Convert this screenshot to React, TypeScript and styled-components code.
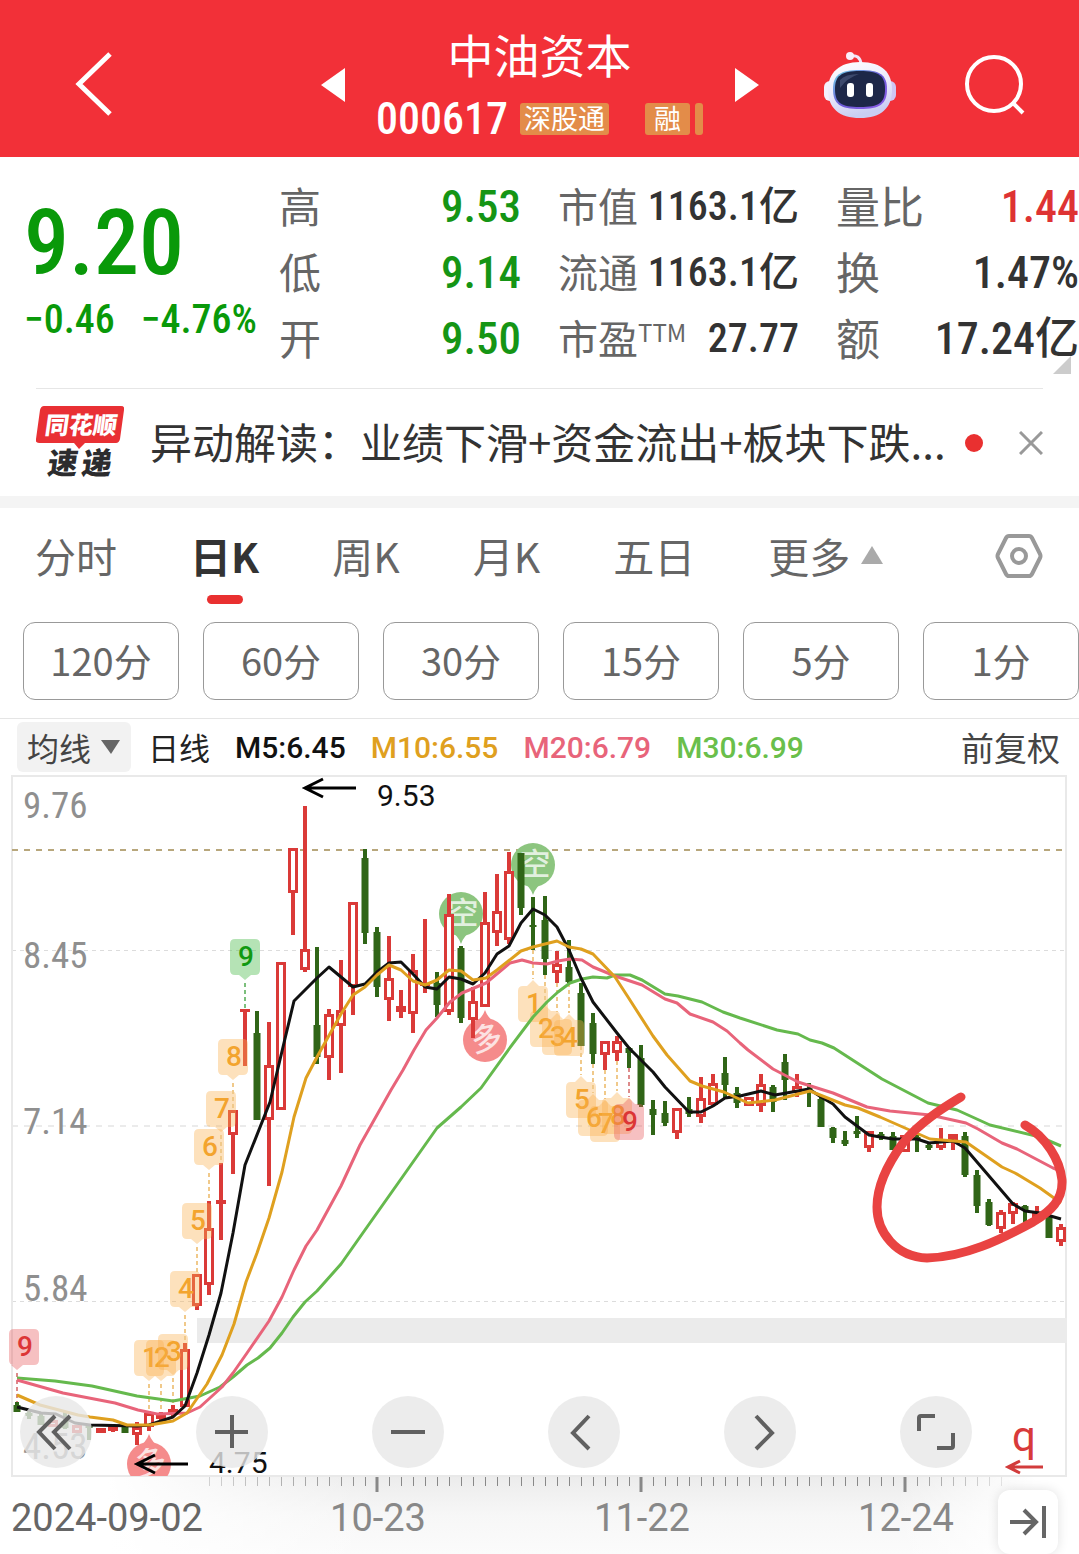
import React from "react";
import styled, { createGlobalStyle } from "styled-components";

const CJK = `"Noto Sans CJK SC", sans-serif`;
const NUM = `"Roboto Condensed", "Liberation Sans Narrow", Roboto, "Noto Sans CJK SC", sans-serif`;
const WIDE = `Roboto, "Noto Sans CJK SC", sans-serif`;

const GlobalStyle = createGlobalStyle`
  *, *::before, *::after { box-sizing: border-box; }
  body { margin: 0; background: #fff; color: #333; font-family: ${CJK}; }
  button, select { font: inherit; color: inherit; background: none; border: 0; padding: 0; margin: 0; cursor: pointer; }
  h1, p, dl, dt, dd { margin: 0; font-weight: 400; }
`;

const Page = styled.main`
  width: 100%;
  overflow-x: hidden;
`;

/* ---------- header ---------- */

const Header = styled.header`
  display: grid;
  grid-template-columns: 1fr 438px 1fr;
  align-items: center;
  height: 157px;
  padding-top: 12px;
  background: #f23038;
  color: #fff;
`;
const BackButton = styled.button`
  justify-self: start;
  margin-left: 72px;
  line-height: 0;
`;
const StockSwitcher = styled.div`
  display: flex;
  align-items: center;
  justify-content: space-between;
`;
const ArrowButton = styled.button`
  line-height: 0;
`;
const StockTitle = styled.div`
  display: flex;
  flex-direction: column;
  align-items: center;
`;
const StockName = styled.h1`
  font-size: 46px;
  line-height: 64px;
`;
const CodeRow = styled.div`
  display: flex;
  align-items: center;
  height: 64px;
  padding-top: 4px;
`;
const Code = styled.span`
  margin-right: 12px;
  font: 500 44px/48px ${NUM};
`;
const Badge = styled.span<{ $gap?: number; $pad?: number }>`
  margin-left: ${(p) => p.$gap ?? 0}px;
  padding: 0 ${(p) => p.$pad ?? 4}px;
  height: 32px;
  border-radius: 3px;
  background: #e38c49;
  font-size: 27px;
  line-height: 30px;
`;
const HeaderActions = styled.div`
  display: flex;
  justify-content: flex-end;
  align-items: center;
  gap: 66px;
  padding-right: 52px;
`;

/* ---------- quote ---------- */

const Quote = styled.section`
  position: relative;
  display: grid;
  grid-template-columns: minmax(0, 218fr) minmax(0, 242fr) minmax(0, 241fr) minmax(0, 243fr);
  column-gap: 37px;
  height: 231px;
  padding: 17px 0 17px 24px;
`;
const PriceBlock = styled.div`
  display: flex;
  flex-direction: column;
  padding-top: 22px;
  color: #099909;
  white-space: nowrap;
`;
const Price = styled.strong`
  font: 500 90px/96px ${NUM};
`;
const Change = styled.p`
  display: flex;
  gap: 26px;
  font: 500 40px/56px ${NUM};
`;
const Stats = styled.dl`
  display: flex;
  flex-direction: column;
`;
const Stat = styled.div`
  display: flex;
  justify-content: space-between;
  align-items: center;
  height: 66px;
  white-space: nowrap;
`;
const StatLabel = styled.dt<{ $size: number }>`
  padding-bottom: 4px;
  font-size: ${(p) => p.$size}px;
  line-height: 60px;
  color: #666;
  sup { font: 400 24px/24px ${CJK}; vertical-align: 12px; }
`;
const StatValue = styled.dd<{ $color?: string; $size: number }>`
  font: 500 ${(p) => p.$size}px/60px ${NUM};
  color: ${(p) => p.$color ?? "#333"};
`;
const Corner = styled.span`
  position: absolute;
  right: 8px;
  bottom: 14px;
  border: 9px solid #ccc;
  border-top-color: transparent;
  border-left-color: transparent;
`;

/* ---------- news ---------- */

const News = styled.section`
  display: flex;
  align-items: center;
  height: 108px;
  margin: 0 36px;
  border-top: 1px solid #e6e6e6;
`;
const NewsLink = styled.a`
  flex: 1;
  margin-left: 26px;
  padding-bottom: 4px;
  font-size: 42px;
  line-height: 60px;
  color: #333;
  text-decoration: none;
  white-space: nowrap;
`;
const Dot = styled.span`
  width: 18px;
  height: 18px;
  margin-right: 36px;
  border-radius: 50%;
  background: #e93030;
`;
const IconButton = styled.button`
  line-height: 0;
`;
const Band = styled.div`
  height: 12px;
  background: #f4f4f4;
`;

/* ---------- period tabs ---------- */

const Tabs = styled.nav`
  display: flex;
  align-items: flex-start;
  gap: 73px;
  height: 114px;
  padding: 18px 36px 0 35px;
`;
const Tab = styled.button<{ $active?: boolean }>`
  display: flex;
  flex-direction: column;
  align-items: center;
  font-size: 41px;
  line-height: 58px;
  font-weight: ${(p) => (p.$active ? 700 : 400)};
  color: ${(p) => (p.$active ? "#333" : "#666")};
  white-space: nowrap;
  &::after {
    content: "";
    width: 36px;
    height: 9px;
    margin-top: 11px;
    border-radius: 5px;
    background: ${(p) => (p.$active ? "#e93030" : "transparent")};
  }
`;
const MoreTab = styled.button`
  display: flex;
  align-items: center;
  gap: 10px;
  font-size: 41px;
  line-height: 58px;
  color: #666;
`;
const SettingsButton = styled.button`
  margin: 5px 0 0 auto;
  line-height: 0;
`;
const Chips = styled.div`
  display: grid;
  grid-template-columns: repeat(6, 1fr);
  gap: 24px;
  padding: 0 0 18px 23px;
`;
const Chip = styled.button`
  height: 78px;
  padding-bottom: 4px;
  border: 1px solid #999;
  border-radius: 12px;
  font-size: 38px;
  color: #666;
`;

/* ---------- legend ---------- */

const Legend = styled.div`
  display: flex;
  align-items: center;
  gap: 25px;
  height: 56px;
  padding: 1px 19px 0 17px;
  border-top: 1px solid #e5e5e5;
  font: 500 30px/48px ${WIDE};
  white-space: nowrap;
`;
const SelectBox = styled.label`
  display: flex;
  align-items: center;
  height: 50px;
  margin-right: -8px;
  padding: 0 11px 0 10px;
  border-radius: 6px;
  background: #f2f2f2;
  select {
    width: 74px;
    appearance: none;
    font: 400 32px/48px ${CJK};
    color: #444;
  }
`;
const LegendName = styled.span`
  font: 400 31px/48px ${CJK};
  color: #222;
`;
const Average = styled.span<{ $color: string }>`
  padding-top: 2px;
  color: ${(p) => p.$color};
`;
const Adjust = styled.button`
  margin-left: auto;
  font: 400 33px/48px ${CJK};
  color: #444;
`;

/* ---------- chart ---------- */

const ChartArea = styled.section`
  position: relative;
`;
const ChartSvg = styled.svg`
  display: block;
  width: 100%;
  height: auto;
`;
const Tools = styled.div`
  position: absolute;
  left: 20px;
  right: 107px;
  bottom: 86px;
  display: flex;
  justify-content: space-between;
`;
const ToolButton = styled.button`
  width: 72px;
  height: 72px;
  border-radius: 50%;
  background: rgba(231, 231, 231, 0.8);
  line-height: 0;
`;
const LatestButton = styled.button`
  position: absolute;
  right: 21px;
  bottom: 0;
  width: 60px;
  height: 64px;
  border-radius: 12px;
  background: #fff;
  box-shadow: 0 0 12px rgba(0, 0, 0, 0.12);
  line-height: 0;
`;

const RED = "#da3a38";
const GREEN = "#306517";
const STEP = 12;
const FIRST = 17;

type Candle = [kind: "r" | "g", high: number, low: number, top: number, bottom: number];

const candles: Candle[] = [
  ["g", 1402, 1412, 1405, 1412], ["g", 1409, 1419, 1413, 1416], ["g", 1412, 1425, 1416, 1425],
  ["r", 1419, 1427, 1420, 1427], ["g", 1412, 1429, 1421, 1428], ["r", 1425, 1433, 1425, 1433],
  ["g", 1425, 1440, 1426, 1428], ["r", 1428, 1433, 1428, 1433], ["r", 1424, 1432, 1426, 1431],
  ["g", 1426, 1433, 1427, 1433], ["r", 1422, 1445, 1427, 1435], ["r", 1411, 1431, 1413, 1427],
  ["r", 1412, 1420, 1413, 1419], ["r", 1405, 1416, 1409, 1415], ["r", 1343, 1407, 1349, 1407],
  ["r", 1274, 1310, 1274, 1306], ["r", 1201, 1295, 1228, 1285], ["r", 1163, 1240, 1200, 1204],
  ["r", 1110, 1174, 1110, 1135], ["r", 1009, 1066, 1009, 1012], ["g", 1011, 1120, 1033, 1120],
  ["r", 1022, 1186, 1065, 1120], ["r", 962, 1110, 962, 1110], ["r", 848, 935, 848, 893],
  ["r", 806, 972, 949, 970], ["g", 947, 1064, 1025, 1057], ["r", 1009, 1080, 1014, 1058],
  ["r", 960, 1073, 1010, 1026], ["r", 902, 1015, 902, 987], ["g", 849, 944, 858, 933],
  ["g", 927, 997, 932, 987], ["r", 936, 1021, 978, 1000], ["r", 990, 1018, 1006, 1012],
  ["r", 954, 1033, 970, 1014], ["r", 919, 993, 983, 986], ["g", 972, 1017, 983, 1005],
  ["r", 894, 1015, 914, 1012], ["g", 946, 1023, 948, 1018], ["r", 987, 1038, 1001, 1020],
  ["r", 892, 1007, 922, 1007], ["r", 874, 946, 911, 933], ["r", 852, 944, 871, 940],
  ["g", 853, 915, 853, 908], ["g", 897, 950, 925, 927], ["g", 896, 975, 920, 959],
  ["r", 951, 983, 964, 973], ["g", 940, 983, 967, 982], ["g", 983, 1046, 993, 1046],
  ["g", 1013, 1064, 1023, 1054], ["r", 1041, 1070, 1041, 1055], ["r", 1036, 1061, 1041, 1053],
  ["g", 1047, 1068, 1048, 1053], ["g", 1045, 1107, 1058, 1105], ["g", 1100, 1135, 1109, 1115],
  ["g", 1101, 1126, 1113, 1123], ["r", 1108, 1139, 1108, 1133], ["g", 1097, 1117, 1109, 1114],
  ["r", 1077, 1123, 1098, 1117], ["r", 1074, 1106, 1083, 1105], ["g", 1057, 1098, 1073, 1085],
  ["g", 1087, 1108, 1093, 1103], ["r", 1097, 1106, 1097, 1106], ["r", 1074, 1112, 1084, 1106],
  ["g", 1085, 1112, 1087, 1102], ["g", 1054, 1100, 1062, 1080], ["r", 1074, 1097, 1086, 1093],
  ["g", 1083, 1107, 1088, 1090], ["g", 1097, 1127, 1099, 1127], ["g", 1127, 1143, 1128, 1138],
  ["g", 1131, 1146, 1140, 1144], ["g", 1116, 1138, 1131, 1134], ["r", 1131, 1152, 1131, 1148],
  ["g", 1132, 1140, 1134, 1138], ["g", 1132, 1150, 1136, 1150], ["r", 1135, 1152, 1135, 1152],
  ["g", 1135, 1152, 1137, 1140], ["g", 1142, 1150, 1145, 1148], ["r", 1128, 1150, 1139, 1148],
  ["r", 1134, 1150, 1134, 1140], ["g", 1132, 1177, 1136, 1175], ["g", 1170, 1213, 1175, 1206],
  ["g", 1199, 1226, 1202, 1225], ["r", 1210, 1233, 1212, 1229], ["r", 1202, 1224, 1203, 1214],
  ["g", 1205, 1225, 1206, 1210], ["r", 1206, 1219, 1212, 1218], ["g", 1207, 1238, 1216, 1238],
  ["r", 1224, 1246, 1227, 1242],
];

const averages = [
  {
    color: "#65b94d",
    points:
      "17,1378 55,1381 92,1386 137,1396 173,1401 200,1396 220,1387 233,1377 247,1365 258,1358 270,1348 282,1333 293,1317 305,1302 317,1291 341,1264 360,1237 401,1179 437,1128 461,1107 481,1088 509,1049 533,1017 547,1002 558,992 570,983 582,979 593,977 607,978 615,975 630,975 642,980 665,994 678,996 702,1002 723,1012 740,1018 777,1030 798,1034 810,1040 822,1043 834,1048 882,1079 928,1103 957,1110 990,1125 1040,1137 1061,1146",
  },
  {
    color: "#e8647a",
    points:
      "17,1380 63,1393 115,1403 138,1410 157,1414 187,1413 200,1407 222,1387 233,1373 247,1353 269,1321 282,1297 294,1270 306,1246 317,1230 341,1186 360,1145 391,1090 403,1070 414,1050 426,1030 437,1018 450,1002 462,993 486,983 498,973 510,963 522,960 533,963 547,964 558,961 570,959 582,960 593,967 615,976 642,985 665,999 677,1003 690,1014 713,1022 727,1031 740,1043 748,1050 773,1069 798,1082 833,1093 867,1107 890,1111 930,1115 966,1123 978,1129 1002,1143 1017,1149 1053,1168 1061,1171",
  },
  {
    color: "#111",
    points:
      "17,1407 41,1413 56,1414 75,1423 90,1425 137,1426 149,1425 173,1417 185,1406 197,1373 209,1335 221,1293 233,1233 245,1165 270,1102 283,1047 294,1001 317,978 329,967 353,987 365,984 377,972 389,963 401,962 413,974 425,987 437,989 449,977 461,979 473,984 485,973 497,954 509,946 521,923 533,909 545,915 557,927 569,950 581,978 593,1002 617,1033 629,1048 641,1060 653,1072 665,1087 689,1112 701,1112 713,1106 725,1098 740,1096 761,1091 775,1095 809,1089 821,1097 833,1104 845,1117 869,1135 880,1137 893,1139 917,1139 929,1143 953,1141 965,1148 1013,1204 1025,1211 1040,1213 1061,1219",
  },
  {
    color: "#dfa01f",
    points:
      "17,1395 40,1405 78,1415 90,1417 113,1420 127,1425 150,1425 173,1421 187,1413 207,1384 222,1355 234,1324 246,1282 257,1253 269,1218 282,1172 294,1117 306,1078 317,1057 341,1014 353,995 365,987 377,975 389,965 401,970 413,981 425,985 437,980 449,970 461,971 473,980 486,978 497,970 521,951 533,947 557,941 569,947 581,949 593,954 615,977 628,997 653,1036 667,1055 690,1081 702,1086 724,1092 748,1103 775,1100 810,1091 845,1105 858,1108 880,1117 930,1139 966,1142 1002,1167 1015,1173 1040,1188 1061,1203",
  },
];

type TagProps = { x: number; y: number; n: number; end: number; tone?: "o" | "r" | "g"; up?: boolean; boxX?: number };

const tones = {
  o: { fill: "rgba(250,176,80,0.38)", text: "#f3a42e", line: "#f0c98a" },
  r: { fill: "rgba(232,90,92,0.38)", text: "#dc3636", line: "#dd8a8a" },
  g: { fill: "rgba(70,185,70,0.4)", text: "#119911", line: "#7cbf7c" },
};

const tags: TagProps[] = [
  { x: 17, y: 1329, n: 9, end: 1402, tone: "r", boxX: 24 },
  { x: 149, y: 1340, n: 1, end: 1411 }, { x: 161, y: 1340, n: 2, end: 1411 },
  { x: 173, y: 1334, n: 3, end: 1405 }, { x: 185, y: 1271, n: 4, end: 1343 },
  { x: 197, y: 1203, n: 5, end: 1274 }, { x: 209, y: 1129, n: 6, end: 1201 },
  { x: 221, y: 1091, n: 7, end: 1163 }, { x: 233, y: 1039, n: 8, end: 1110 },
  { x: 245, y: 939, n: 9, end: 1009, tone: "g" },
  { x: 533, y: 986, n: 1, end: 950, up: true }, { x: 545, y: 1011, n: 2, end: 975, up: true },
  { x: 557, y: 1019, n: 3, end: 983, up: true }, { x: 569, y: 1020, n: 4, end: 983, up: true },
  { x: 581, y: 1082, n: 5, end: 1046, up: true }, { x: 593, y: 1100, n: 6, end: 1064, up: true },
  { x: 605, y: 1106, n: 7, end: 1070, up: true }, { x: 617, y: 1098, n: 8, end: 1061, up: true },
  { x: 629, y: 1104, n: 9, end: 1068, tone: "r", up: true },
];

function Tag({ x, y, n, end, tone = "o", up, boxX = x }: TagProps) {
  const t = tones[tone];
  const l = boxX - 15;
  const r = boxX + 15;
  const b = y + 36;
  const d = up
    ? `M${l + 5} ${y}H${x - 6}L${x} ${y - 6}L${x + 6} ${y}H${r - 5}q5 0 5 5V${b - 5}q0 5 -5 5H${l + 5}q-5 0 -5 -5V${y + 5}q0 -5 5 -5Z`
    : `M${l + 5} ${y}H${r - 5}q5 0 5 5V${b - 5}q0 5 -5 5H${x + 6}L${x} ${b + 5}L${x - 6} ${b}H${l + 5}q-5 0 -5 -5V${y + 5}q0 -5 5 -5Z`;
  return (
    <g>
      <path d={`M${x} ${up ? end : b + 8}V${up ? y - 7 : end}`} stroke={t.line} strokeWidth="2" strokeDasharray="4 3" />
      <path d={d} fill={t.fill} />
      <text x={boxX + 1} y={y + 27} textAnchor="middle" fill={t.text} fontFamily="Roboto, sans-serif" fontWeight="500" fontSize="28">
        {n}
      </text>
    </g>
  );
}

function Marker({ x, y, long }: { x: number; y: number; long?: boolean }) {
  const s = long ? -1 : 1;
  return (
    <g>
      <g fill={long ? "#f58b8b" : "#8cc57f"}>
        <circle cx={x} cy={y} r="22" />
        <path d={`M${x - 12} ${y + s * 16}Q${x - 3} ${y + s * 21} ${x} ${y + s * 30}Q${x + 3} ${y + s * 21} ${x + 12} ${y + s * 16}Z`} />
      </g>
      <text
        x={x + 2} y={y + 10} textAnchor="middle" fontSize="31" fontWeight="500" fill="#fff" fillOpacity="0.75" fontFamily={CJK}
        transform={long ? `rotate(-12 ${x} ${y})` : undefined}
      >
        {long ? "多" : "空"}
      </text>
    </g>
  );
}

function Arrow({ x, y, length, color, size, width }: { x: number; y: number; length: number; color: string; size: number; width: number }) {
  return (
    <path
      d={`M${x + length} ${y}H${x}M${x + size * 2} ${y - size}L${x} ${y}L${x + size * 2} ${y + size}`}
      fill="none" stroke={color} strokeWidth={width}
    />
  );
}

const priceLabels: [string, number][] = [["9.76", 818], ["8.45", 968], ["7.14", 1134], ["5.84", 1301], ["4.53", 1459]];
const dateLabels: [string, number][] = [["10-23", 378], ["11-22", 642], ["12-24", 906]];
const minorTicks = Array.from({ length: 67 }, (_, i) => 209 + i * STEP);

function KLineChart() {
  return (
    <ChartSvg viewBox="0 774 1079 780" role="img" aria-label="日K线">
      <defs>
        <linearGradient id="axisX" x1="0" x2="1" y1="0" y2="0">
          <stop offset="0.1" stopColor="#fff" />
          <stop offset="0.35" stopColor="#fff" stopOpacity="0" />
          <stop offset="0.83" stopColor="#fff" stopOpacity="0" />
          <stop offset="0.96" stopColor="#fff" />
        </linearGradient>
        <linearGradient id="axisY" x1="0" x2="0" y1="0" y2="1">
          <stop offset="0" stopColor="#ececec" />
          <stop offset="0.5" stopColor="#f7f7f7" />
          <stop offset="1" stopColor="#fbfbfb" />
        </linearGradient>
        <clipPath id="plot"><rect x="0" y="774" width="1079" height="702" /></clipPath>
      </defs>

      <rect x="0" y="1477" width="1079" height="77" fill="url(#axisY)" />
      <g stroke="#888" strokeWidth="1">
        {minorTicks.map((x) => <path key={x} d={`M${x + 0.5} 1477V1486`} />)}
      </g>
      <rect x="0" y="1477" width="1079" height="77" fill="url(#axisX)" />
      <path d="M377 1477V1492M641 1477V1492M905 1477V1492" stroke="#888" strokeWidth="3" />

      <path d="M12 950.5H1067M12 1301.5H1067" stroke="#dcdcdc" strokeDasharray="4 4" />
      <path d="M12 1126H1067" stroke="#ebebeb" strokeWidth="2" strokeDasharray="6 6" />
      <rect x="12" y="776" width="1054" height="700" fill="none" stroke="#e9e9e9" strokeWidth="2" />
      <rect x="197" y="1318" width="870" height="25" fill="#ebebeb" />
      <path d="M12 850H1062" stroke="#b8a77c" strokeWidth="2" strokeDasharray="6 6" />

      <g fontFamily={NUM} fontWeight="400" fontSize="37" fill="#8f8f8f">
        {priceLabels.map(([label, y]) => <text key={label} x="23" y={y}>{label}</text>)}
      </g>

      <g clipPath="url(#plot)">
        <Marker x={461} y={914} />
        <Marker x={533} y={865} />
        <Marker x={485} y={1040} long />
        <Marker x={149} y={1464} long />
      </g>

      {candles.map(([kind, high, low, top, bottom], i) => {
        const x = FIRST + i * STEP;
        const h = bottom - top;
        if (kind === "g") {
          return (
            <g key={x} fill={GREEN}>
              <rect x={x - 2} y={high} width="4" height={low - high} />
              <rect x={x - 3.5} y={top} width="7" height={h} />
            </g>
          );
        }
        return (
          <g key={x} fill={RED}>
            <rect x={x - 2} y={high} width="4" height={top - high} />
            <rect x={x - 2} y={bottom} width="4" height={low - bottom} />
            {h > 6 ? (
              <rect x={x - 3.5} y={top + 1.5} width="7" height={h - 3} fill="#fff" stroke={RED} strokeWidth="3" />
            ) : (
              <rect x={x - 5} y={top} width="10" height={h} />
            )}
          </g>
        );
      })}

      {tags.map((tag) => <Tag key={tag.x} {...tag} />)}

      {averages.map((line) => (
        <polyline key={line.color} points={line.points} fill="none" stroke={line.color} strokeWidth="3" strokeLinejoin="round" />
      ))}

      <Arrow x={305} y={788} length={51} size={9} width={3} color="#000" />
      <text x="377" y="806" fontFamily="Roboto, sans-serif" fontSize="30" fill="#111">9.53</text>
      <Arrow x={137} y={1464} length={51} size={9} width={3} color="#000" />
      <text x="209" y="1473" fontFamily="Roboto, sans-serif" fontSize="30" fill="#111">4.75</text>

      <path
        d="M961 1097C943 1108 920 1122 903 1143C889 1162 877 1185 877 1207C877 1232 896 1257 927 1258C965 1257 1000 1240 1033 1222C1051 1211 1063 1200 1062 1180C1060 1160 1046 1137 1025 1125"
        fill="none" stroke="#e94342" strokeWidth="9" strokeLinecap="round"
      />

      <text x="1024" y="1451" textAnchor="middle" fontFamily="Roboto, sans-serif" fontWeight="400" fontSize="42" fill="#d83a3a">q</text>
      <Arrow x={1008} y={1467} length={35} size={6} width={3} color="#d23c3c" />

      <g fontFamily="Roboto, sans-serif" fontSize="38">
        <text x="11" y="1531" fill="#666">2024-09-02</text>
        {dateLabels.map(([label, x]) => <text key={label} x={x} y="1531" textAnchor="middle" fill="#888">{label}</text>)}
      </g>
    </ChartSvg>
  );
}

function ToolIcon({ d }: { d: string }) {
  return (
    <svg width="72" height="72" viewBox="0 0 72 72" fill="none" stroke="#606060" strokeWidth="4" aria-hidden="true">
      <path d={d} />
    </svg>
  );
}

const tools = [
  { label: "最早", d: "M50 20L34 36L50 53M35 20L19 36L35 53" },
  { label: "放大", d: "M36 19V52M19 36H52" },
  { label: "缩小", d: "M19 36H53" },
  { label: "左移", d: "M41 20L25 37L41 53" },
  { label: "右移", d: "M32 20L48 37L32 53" },
  { label: "全屏", d: "M19 35V22Q19 20 21 20H35M37 52H51Q53 52 53 50V37" },
];

function Robot() {
  return (
    <svg width="74" height="68" viewBox="0 0 74 68" aria-hidden="true">
      <defs>
        <linearGradient id="shell" x1="0" y1="0" x2="0.3" y2="1">
          <stop offset="0" stopColor="#fff" />
          <stop offset="0.6" stopColor="#eae8fb" />
          <stop offset="1" stopColor="#c9cdf2" />
        </linearGradient>
        <linearGradient id="visor" x1="0" y1="0" x2="1" y2="1">
          <stop offset="0" stopColor="#72d6e8" />
          <stop offset="0.5" stopColor="#6b5bd6" />
          <stop offset="1" stopColor="#8d5be8" />
        </linearGradient>
      </defs>
      <path d="M27 5Q37 3 38 13" fill="none" stroke="#f0e6fa" strokeWidth="3" />
      <circle cx="27" cy="5" r="4" fill="#fbeefa" />
      <rect x="1" y="30" width="12" height="20" rx="6" fill="#f4f0fd" />
      <rect x="61" y="30" width="12" height="20" rx="6" fill="#cfc6f4" />
      <path d="M37 11C60 11 69 22 69 39C69 57 58 67 37 67C16 67 5 57 5 39C5 22 16 11 37 11Z" fill="url(#shell)" />
      <path d="M37 19C57 19 64 24 64 38C64 53 57 58 37 58C17 58 10 53 10 38C10 24 17 19 37 19Z" fill="url(#visor)" />
      <path d="M37 20C56 20 62 25 62 38C62 52 56 56 37 56C18 56 12 52 12 38C12 25 18 20 37 20Z" fill="#1d2748" />
      <path d="M17 29Q22 23 36 23Q24 27 17 37Z" fill="#4b587c" opacity="0.7" />
      <rect x="24" y="32" width="7" height="14" rx="3" fill="#fff" />
      <rect x="43" y="32" width="7" height="14" rx="3" fill="#fff" />
    </svg>
  );
}

function NewsLogo() {
  return (
    <svg width="88" height="84" viewBox="0 -5 88 84" role="img" aria-label="同花顺速递">
      <path d="M8 0H85Q89 0 88 4L84 33Q83 37 80 37H49L43 43L38 37H3Q-1 37 0 33L4 4Q5 0 8 0Z" fill="#e93034" />
      <g fontFamily={CJK} fontWeight="900" transform="skewX(-8)">
        <text x="12" y="28" fontSize="24" fill="#fff">同花顺</text>
        <text x="20" y="68" fontSize="30" fill="#2c2c2e">速</text>
        <text x="54" y="68" fontSize="30" fill="#2c2c2e">递</text>
      </g>
    </svg>
  );
}

type StatItem = { id: string; label: React.ReactNode; value: string; color?: string };
const columns: { labelSize: number; valueSize: number; items: StatItem[] }[] = [
  {
    labelSize: 42, valueSize: 45,
    items: [
      { id: "high", label: "高", value: "9.53", color: "#159515" },
      { id: "low", label: "低", value: "9.14", color: "#159515" },
      { id: "open", label: "开", value: "9.50", color: "#159515" },
    ],
  },
  {
    labelSize: 40, valueSize: 40,
    items: [
      { id: "cap", label: "市值", value: "1163.1亿" },
      { id: "float", label: "流通", value: "1163.1亿" },
      { id: "pe", label: <>市盈<sup>TTM</sup></>, value: "27.77" },
    ],
  },
  {
    labelSize: 44, valueSize: 44,
    items: [
      { id: "ratio", label: "量比", value: "1.44", color: "#de3333" },
      { id: "turnover", label: "换", value: "1.47%" },
      { id: "amount", label: "额", value: "17.24亿" },
    ],
  },
];

const periods = ["分时", "日K", "周K", "月K", "五日"];
const minutes = ["120分", "60分", "30分", "15分", "5分", "1分"];

export default function App() {
  return (
    <Page>
      <GlobalStyle />
      <Header>
        <BackButton aria-label="返回">
          <svg width="44" height="66" viewBox="0 0 44 66" fill="none" stroke="#fff" strokeWidth="5" aria-hidden="true">
            <path d="M38 2L7 32L38 62" />
          </svg>
        </BackButton>
        <StockSwitcher>
          <ArrowButton aria-label="上一只">
            <svg width="24" height="34" aria-hidden="true"><path d="M0 17L24 0V34Z" fill="#fff" /></svg>
          </ArrowButton>
          <StockTitle>
            <StockName>中油资本</StockName>
            <CodeRow>
              <Code>000617</Code>
              <Badge>深股通</Badge>
              <Badge $gap={36} $pad={9}>融</Badge>
              <Badge $gap={5} />
            </CodeRow>
          </StockTitle>
          <ArrowButton aria-label="下一只">
            <svg width="24" height="34" aria-hidden="true"><path d="M24 17L0 0V34Z" fill="#fff" /></svg>
          </ArrowButton>
        </StockSwitcher>
        <HeaderActions>
          <IconButton aria-label="助手"><Robot /></IconButton>
          <IconButton aria-label="搜索">
            <svg width="64" height="62" viewBox="0 0 64 62" fill="none" stroke="#fff" strokeWidth="4" aria-hidden="true">
              <circle cx="31" cy="30" r="27" /><path d="M49 48L60 59" />
            </svg>
          </IconButton>
        </HeaderActions>
      </Header>

      <Quote>
        <PriceBlock>
          <Price>9.20</Price>
          <Change><span>−0.46</span><span>−4.76%</span></Change>
        </PriceBlock>
        {columns.map((col) => (
          <Stats key={col.items[0].id}>
            {col.items.map((item) => (
              <Stat key={item.id}>
                <StatLabel $size={col.labelSize}>{item.label}</StatLabel>
                <StatValue $size={col.valueSize} $color={item.color}>{item.value}</StatValue>
              </Stat>
            ))}
          </Stats>
        ))}
        <Corner />
      </Quote>

      <News>
        <NewsLogo />
        <NewsLink href="#news">异动解读：业绩下滑+资金流出+板块下跌...</NewsLink>
        <Dot />
        <IconButton aria-label="关闭">
          <svg width="24" height="24" fill="none" stroke="#999" strokeWidth="3" aria-hidden="true">
            <path d="M1 1L23 23M23 1L1 23" />
          </svg>
        </IconButton>
      </News>
      <Band />

      <Tabs>
        {periods.map((p) => <Tab key={p} $active={p === "日K"}>{p}</Tab>)}
        <MoreTab aria-expanded="true">
          更多
          <svg width="24" height="20" aria-hidden="true"><path d="M12 1L23 19H1Z" fill="#aaa" /></svg>
        </MoreTab>
        <SettingsButton aria-label="设置">
          <svg width="48" height="50" viewBox="0 0 48 50" fill="none" stroke="#999" strokeWidth="4" strokeLinejoin="round" aria-hidden="true">
            <path d="M14 5H34Q36 5 37 7L45 23Q46 25 45 27L37 43Q36 45 34 45H14Q12 45 11 43L3 27Q2 25 3 23L11 7Q12 5 14 5Z" />
            <circle cx="24" cy="25" r="7" />
          </svg>
        </SettingsButton>
      </Tabs>
      <Chips>
        {minutes.map((m) => <Chip key={m}>{m}</Chip>)}
      </Chips>

      <Legend>
        <SelectBox>
          <select aria-label="指标" defaultValue="均线"><option>均线</option></select>
          <svg width="19" height="14" aria-hidden="true"><path d="M0 0H19L10 14Z" fill="#666" /></svg>
        </SelectBox>
        <LegendName>日线</LegendName>
        <Average $color="#111">M5:6.45</Average>
        <Average $color="#dfa01f">M10:6.55</Average>
        <Average $color="#e8647a">M20:6.79</Average>
        <Average $color="#6abf4b">M30:6.99</Average>
        <Adjust>前复权</Adjust>
      </Legend>

      <ChartArea>
        <KLineChart />
        <Tools>
          {tools.map((t) => (
            <ToolButton key={t.label} aria-label={t.label}><ToolIcon d={t.d} /></ToolButton>
          ))}
        </Tools>
        <LatestButton aria-label="最新">
          <svg width="60" height="64" viewBox="0 0 60 64" fill="none" stroke="#666" strokeWidth="4" aria-hidden="true">
            <path d="M12 32H38M26 20L38 32L26 44M46 16V48" />
          </svg>
        </LatestButton>
      </ChartArea>
    </Page>
  );
}
